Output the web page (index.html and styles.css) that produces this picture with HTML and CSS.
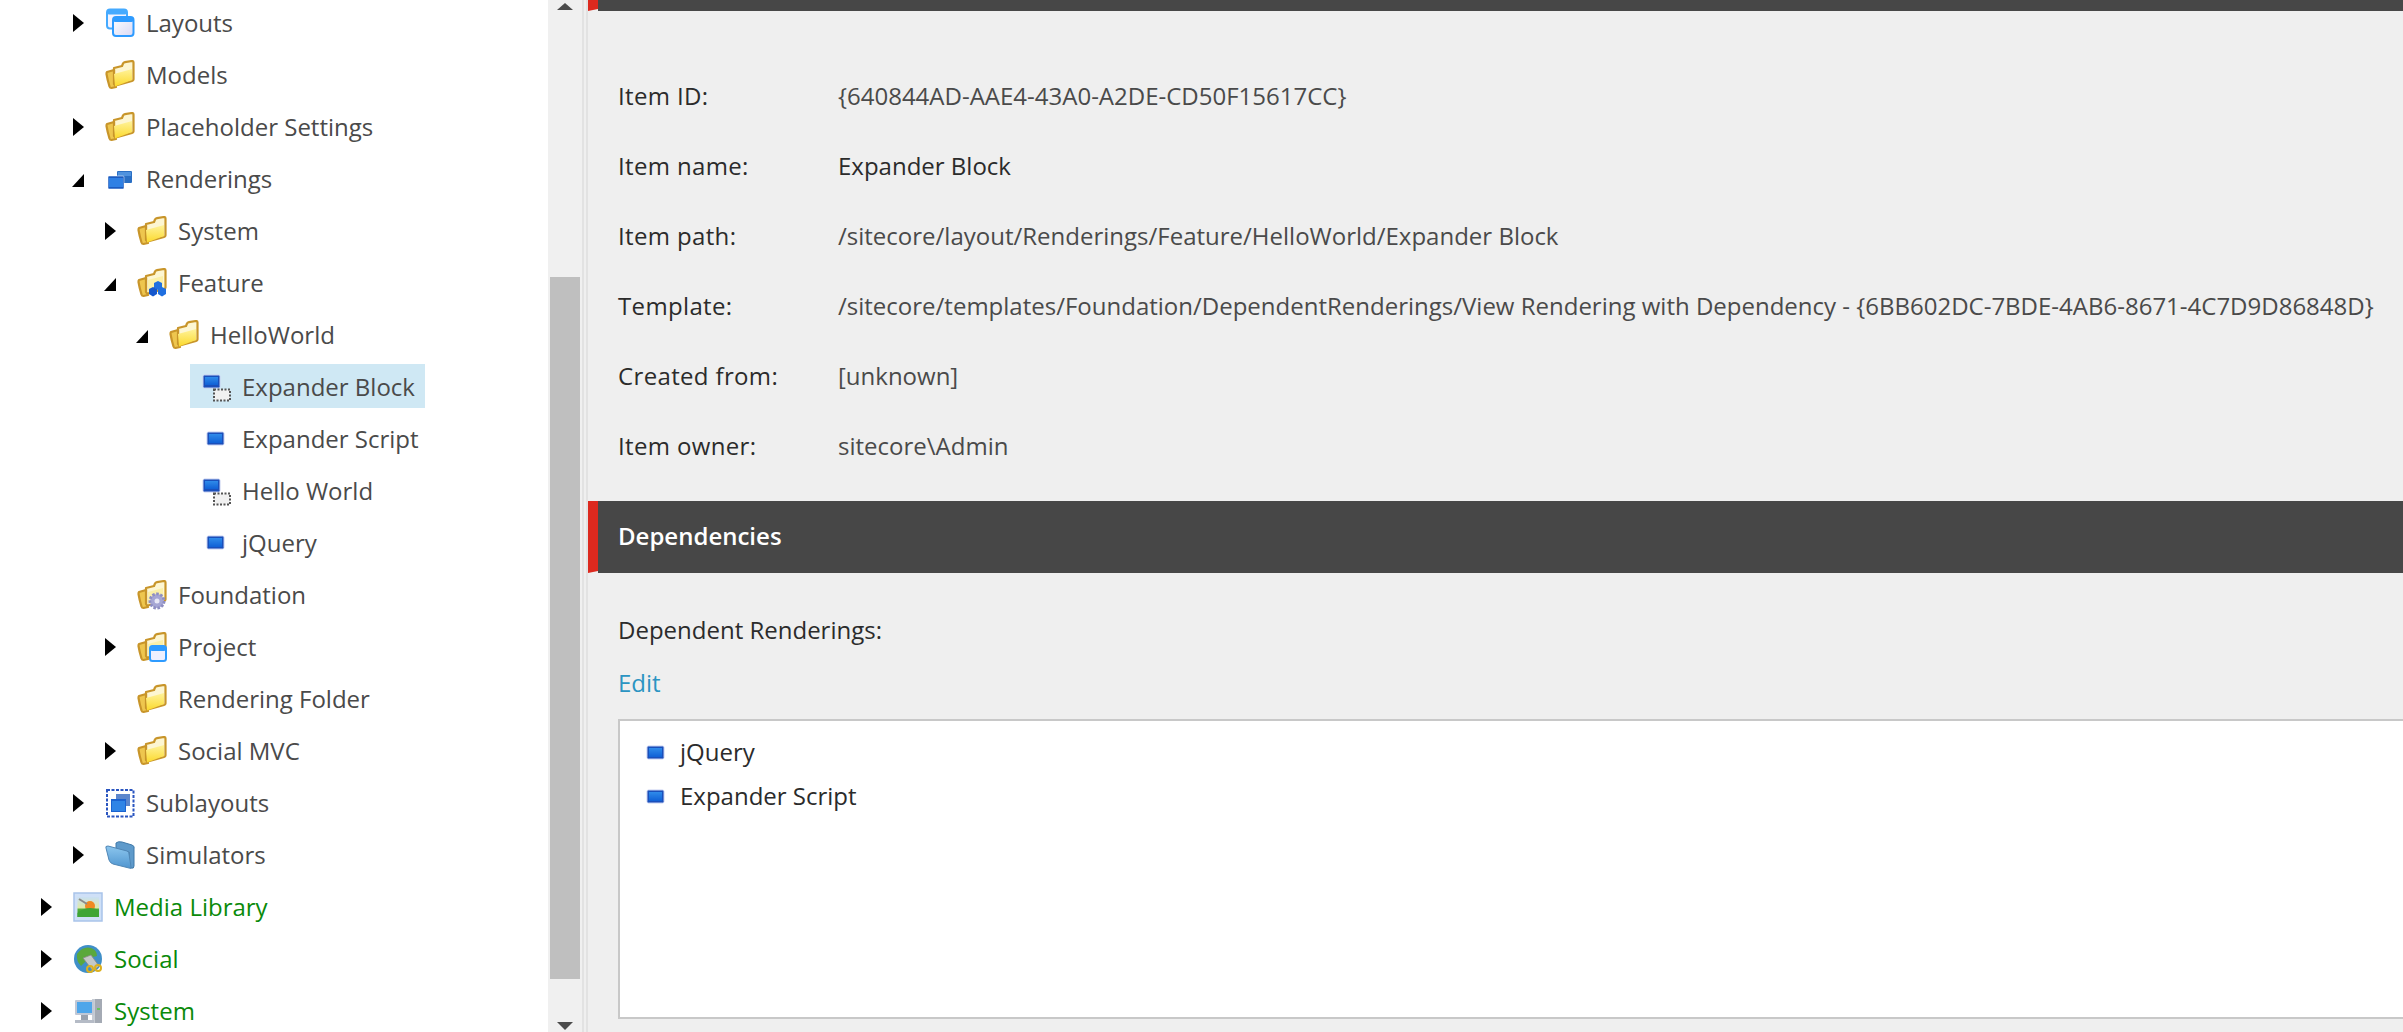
FILE: index.html
```html
<!DOCTYPE html>
<html lang="en">
<head>
<meta charset="utf-8">
<title>Expander Block</title>
<link rel="stylesheet" href="styles.css">
</head>
<body>
<svg class="defs" width="0" height="0" aria-hidden="true">
  <defs>
    <linearGradient id="gy" x1="0" y1="0" x2="0" y2="1"><stop offset="0" stop-color="#fff39a"/><stop offset="1" stop-color="#fbd92c"/></linearGradient>
    <linearGradient id="gb" x1="0" y1="0" x2="0" y2="1"><stop offset="0" stop-color="#2f8bea"/><stop offset="1" stop-color="#1060d6"/></linearGradient>
    <linearGradient id="gf" x1="0" y1="0" x2="0" y2="1"><stop offset="0" stop-color="#8cc6ee"/><stop offset="1" stop-color="#4f95cf"/></linearGradient>
    <linearGradient id="gw" x1="0" y1="0" x2="1" y2="1"><stop offset="0" stop-color="#fff"/><stop offset="1" stop-color="#d9d9f5"/></linearGradient>
    <linearGradient id="gs" x1="0" y1="0" x2="0" y2="1"><stop offset="0" stop-color="#c9e0f4"/><stop offset="0.55" stop-color="#dfe9a8"/><stop offset="0.6" stop-color="#55b23c"/><stop offset="1" stop-color="#2f8f2c"/></linearGradient>
    <symbol id="folder" viewBox="0 0 30 30">
      <path d="M9 8 L17 6 L18 3.500 Q18.500 2.500 20 2.200 L27 1 Q28.500 1 28.500 2.500 V19.500 Q28.500 20.500 27 21 L9 26Z" fill="#fdf6d2" stroke="#c8952a" stroke-width="2.200" stroke-linejoin="round"/>
      <path d="M2 12 L9 10 V24 L11 27 L6.500 28 Q5 28 4.500 26.500 Q2.500 20 1.500 14 Q1.500 12.500 2 12Z" fill="#eec64e" stroke="#c8952a" stroke-width="2.200" stroke-linejoin="round"/>
      <path d="M9 14 L27 9 V20 L10 26.500 Z" fill="url(#gy)"/>
    </symbol>
    <symbol id="folder-back" viewBox="0 0 30 30">
      <path d="M9 8 L17 6 L18 3.500 Q18.500 2.500 20 2.200 L27 1 Q28.500 1 28.500 2.500 V19.500 Q28.500 20.500 27 21 L9 26Z" fill="#fdf6d2" stroke="#c8952a" stroke-width="2.200" stroke-linejoin="round"/>
      <path d="M2 12 L9 10 V24 L11 27 L6.500 28 Q5 28 4.500 26.500 Q2.500 20 1.500 14 Q1.500 12.500 2 12Z" fill="#eec64e" stroke="#c8952a" stroke-width="2.200" stroke-linejoin="round"/>
      <path d="M11 12 L26 8 V19 L11 24Z" fill="#fbf0a8"/>
    </symbol>
    <symbol id="r-rect" viewBox="0 0 30 30">
      <rect x="6" y="8" width="17" height="13" rx="1.500" fill="#1a4fba" stroke="#c6cff0" stroke-width="1"/>
      <rect x="8" y="10" width="13" height="9" fill="url(#gb)"/>
    </symbol>
    <symbol id="r-view" viewBox="0 0 30 30">
      <rect x="2" y="3" width="17" height="13" rx="1.500" fill="#1a4fba" stroke="#c6cff0" stroke-width="1"/>
      <rect x="4" y="5" width="13" height="8" fill="url(#gb)"/>
      <rect x="13" y="17.500" width="16" height="11" fill="#f1f1f1" stroke="#555" stroke-width="2" stroke-dasharray="2 1.500"/>
    </symbol>
  </defs>
</svg>
<div class="app">
  <nav class="tree">
    <div class="row lv2"><span class="twisty closed"></span><span class="item"><svg class="icon" viewBox="0 0 30 30"><rect x="2" y="1.500" width="20" height="19" rx="3" fill="#f3f3ff" stroke="#45aaff" stroke-width="2"/><rect x="2" y="1.500" width="20" height="5" rx="2" fill="#45aaff"/><rect x="8" y="9" width="20.500" height="19" rx="3" fill="url(#gw)" stroke="#2e9bff" stroke-width="2"/><rect x="8" y="9" width="20.500" height="5" rx="2" fill="#2e9bff"/></svg><span class="label">Layouts</span></span></div>
    <div class="row lv2"><span class="twisty"></span><span class="item"><svg class="icon"><use href="#folder"/></svg><span class="label">Models</span></span></div>
    <div class="row lv2"><span class="twisty closed"></span><span class="item"><svg class="icon"><use href="#folder"/></svg><span class="label">Placeholder Settings</span></span></div>
    <div class="row lv2"><span class="twisty open"></span><span class="item"><svg class="icon" viewBox="0 0 30 30"><rect x="12" y="7" width="15" height="12" rx="1" fill="#2a6fc4"/><rect x="13" y="8" width="13" height="4" fill="#4f92de"/><rect x="3" y="12" width="16" height="13" rx="1" fill="#1b5bc0" stroke="#fff" stroke-width="0.500"/><rect x="4" y="14" width="14" height="9" fill="#2f80e4"/></svg><span class="label">Renderings</span></span></div>
    <div class="row lv3"><span class="twisty closed"></span><span class="item"><svg class="icon"><use href="#folder"/></svg><span class="label">System</span></span></div>
    <div class="row lv3"><span class="twisty open"></span><span class="item"><svg class="icon" viewBox="0 0 30 30"><use href="#folder-back"/><path d="M17 15 L21 13 L25 15 V20 L21 22 L17 20Z" fill="#1f6fe0"/><path d="M12 21 L16 19 L20 21 V26 L16 28.500 L12 26Z" fill="#1557cc"/><path d="M21 21 L25 19 L29 21 V26 L25 28.500 L21 26Z" fill="#1f6fe0"/></svg><span class="label">Feature</span></span></div>
    <div class="row lv4"><span class="twisty open"></span><span class="item"><svg class="icon"><use href="#folder"/></svg><span class="label">HelloWorld</span></span></div>
    <div class="row lv5"><span class="twisty"></span><span class="item selected"><svg class="icon"><use href="#r-view"/></svg><span class="label">Expander Block</span></span></div>
    <div class="row lv5"><span class="twisty"></span><span class="item"><svg class="icon"><use href="#r-rect"/></svg><span class="label">Expander Script</span></span></div>
    <div class="row lv5"><span class="twisty"></span><span class="item"><svg class="icon"><use href="#r-view"/></svg><span class="label">Hello World</span></span></div>
    <div class="row lv5"><span class="twisty"></span><span class="item"><svg class="icon"><use href="#r-rect"/></svg><span class="label">jQuery</span></span></div>
    <div class="row lv3"><span class="twisty"></span><span class="item"><svg class="icon" viewBox="0 0 30 30"><use href="#folder-back"/><circle cx="20" cy="21" r="7" fill="#a9a9d6" stroke="#8e8ec2" stroke-width="3" stroke-dasharray="2.500 1.500"/><circle cx="20" cy="21" r="5.500" fill="#a6a6d4"/><circle cx="20" cy="21" r="2.500" fill="#e8e8f6"/></svg><span class="label">Foundation</span></span></div>
    <div class="row lv3"><span class="twisty closed"></span><span class="item"><svg class="icon" viewBox="0 0 30 30"><use href="#folder-back"/><rect x="13" y="14" width="16" height="15" rx="2.500" fill="#eef0ff" stroke="#2e9bff" stroke-width="2"/><rect x="13" y="14" width="16" height="5" rx="2" fill="#2e9bff"/></svg><span class="label">Project</span></span></div>
    <div class="row lv3"><span class="twisty"></span><span class="item"><svg class="icon"><use href="#folder"/></svg><span class="label">Rendering Folder</span></span></div>
    <div class="row lv3"><span class="twisty closed"></span><span class="item"><svg class="icon"><use href="#folder"/></svg><span class="label">Social MVC</span></span></div>
    <div class="row lv2"><span class="twisty closed"></span><span class="item"><svg class="icon" viewBox="0 0 30 30"><rect x="2" y="2" width="26.500" height="26.500" fill="#fff" stroke="#2a55c0" stroke-width="2" stroke-dasharray="3 1.500"/><rect x="11" y="6" width="14" height="12" fill="#5c86cc"/><rect x="6" y="11" width="15" height="13" fill="#1a62d0"/><rect x="7" y="13" width="13" height="10" fill="#2f84e6"/></svg><span class="label">Sublayouts</span></span></div>
    <div class="row lv2"><span class="twisty closed"></span><span class="item"><svg class="icon" viewBox="0 0 30 30"><path d="M11 3 Q13 1 17 2 L27 5 Q30 6 29 9 V26 Q29 29 26 28 L24 27 V12 L11 9Z" fill="#5e9acb" stroke="#3f78a8" stroke-width="1"/><path d="M1 8 Q0 6 3 6 L22 11 Q24 12 24 14 L26 27 Q27 29 24 28 L8 24 Q5 23 4 20Z" fill="url(#gf)" stroke="#4f86b5" stroke-width="1"/></svg><span class="label">Simulators</span></span></div>
    <div class="row lv1"><span class="twisty closed"></span><span class="item"><svg class="icon" viewBox="0 0 30 30"><rect x="1" y="1" width="28" height="28" fill="#cfe0f7" stroke="#a9c4ea" stroke-width="1.500"/><rect x="4.500" y="5" width="21.500" height="20" fill="url(#gs)"/><circle cx="17" cy="14" r="5" fill="#f08a22"/><path d="M4.500 21 Q14 13 26 18 V25 H4.500Z" fill="#3fa535"/><path d="M6 7 L14 12" stroke="#8a8a8a" stroke-width="2"/></svg><span class="label link">Media Library</span></span></div>
    <div class="row lv1"><span class="twisty closed"></span><span class="item"><svg class="icon" viewBox="0 0 30 30"><circle cx="15" cy="15" r="14" fill="#3f8fc8"/><path d="M4 10 Q10 2 18 4 Q24 6 24 12 L16 14 L8 22 Q3 17 4 10Z" fill="#5aa83c"/><path d="M10 14 L18 11 L26 22 L20 27Z" fill="#c4c8c8" stroke="#888" stroke-width="0.800"/><circle cx="17" cy="25" r="3" fill="none" stroke="#dcb01e" stroke-width="2"/><circle cx="25" cy="24" r="3" fill="none" stroke="#dcb01e" stroke-width="2"/></svg><span class="label link">Social</span></span></div>
    <div class="row lv1"><span class="twisty closed"></span><span class="item"><svg class="icon" viewBox="0 0 30 30"><rect x="19" y="3" width="10" height="24" fill="#a4aab4"/><rect x="19" y="3" width="3" height="24" fill="#c8cdd4"/><rect x="24" y="12" width="3" height="2" fill="#66c45a"/><rect x="2" y="4" width="19" height="15" rx="1" fill="#c0c8d6"/><rect x="4" y="6" width="15" height="11" fill="#4ea6ea"/><path d="M2 24 H21 V27 H2Z" fill="#b5bbc6"/><rect x="8" y="19" width="7" height="5" fill="#9aa2ae"/></svg><span class="label link">System</span></span></div>
  </nav>
  <div class="scrollbar">
    <span class="arrow up"></span>
    <div class="thumb"></div>
    <span class="arrow down"></span>
  </div>
  <div class="splitter"></div>
  <main class="content">
    <div class="bar bar-top"></div>
    <dl class="info">
      <dt>Item ID:</dt><dd>{640844AD-AAE4-43A0-A2DE-CD50F15617CC}</dd>
      <dt>Item name:</dt><dd class="strong">Expander Block</dd>
      <dt>Item path:</dt><dd>/sitecore/layout/Renderings/Feature/HelloWorld/Expander Block</dd>
      <dt>Template:</dt><dd>/sitecore/templates/Foundation/DependentRenderings/View Rendering with Dependency - {6BB602DC-7BDE-4AB6-8671-4C7D9D86848D}</dd>
      <dt>Created from:</dt><dd>[unknown]</dd>
      <dt>Item owner:</dt><dd>sitecore\Admin</dd>
    </dl>
    <h2 class="bar bar-title">Dependencies</h2>
    <section class="deps">
      <div class="deps-label">Dependent Renderings:</div>
      <a class="edit">Edit</a>
      <div class="box">
        <div class="box-item"><svg class="icon"><use href="#r-rect"/></svg><span>jQuery</span></div>
        <div class="box-item"><svg class="icon"><use href="#r-rect"/></svg><span>Expander Script</span></div>
      </div>
    </section>
  </main>
</div>
</body>
</html>
```

FILE: styles.css
```css
html, body {
  margin: 0;
  height: 100%;
  overflow: hidden;
  background: #fff;
  font-family: "Open Sans", "Noto Sans", sans-serif;
  font-size: 24px;
  color: #4a4a4a;
}
.defs { position: absolute; }
.app { display: flex; height: 1032px; overflow: hidden; }

.tree { width: 548px; flex: none; margin-top: -3px; }
.row { display: flex; align-items: center; height: 52px; white-space: nowrap; }
.lv1 { padding-left: 32px; }
.lv2 { padding-left: 64px; }
.lv3 { padding-left: 96px; }
.lv4 { padding-left: 128px; }
.lv5 { padding-left: 160px; }
.twisty { width: 30px; flex: none; display: flex; padding-left: 9px; box-sizing: border-box; }
.twisty.closed::before {
  content: "";
  border-left: 11px solid #000;
  border-top: 9px solid transparent;
  border-bottom: 9px solid transparent;
}
.twisty.open::before {
  content: "";
  margin: 2px 0 0 -1px;
  border-bottom: 13px solid #000;
  border-left: 12px solid transparent;
}
.item { display: flex; align-items: center; height: 46px; padding: 0 10px 0 11px; }
.item.selected { background: linear-gradient(#cfe8f4, #cfe8f4) 0 0 / 100% 44px no-repeat; }
.icon { width: 30px; height: 30px; flex: none; filter: blur(0.35px); }
.label { margin-left: 11px; line-height: 44px; }
.link { color: #0a8a0a; }

.scrollbar {
  width: 34px;
  flex: none;
  background: #f0f0f0;
  display: flex;
  flex-direction: column;
  align-items: center;
}
.arrow { width: 0; height: 0; border-left: 8px solid transparent; border-right: 8px solid transparent; }
.arrow.up { margin-top: 3px; border-bottom: 7px solid #4c4c4c; }
.arrow.down { margin-top: 43px; border-top: 8px solid #4c4c4c; }
.thumb { width: 30px; height: 702px; margin-top: 267px; background: #bfbfbf; }

.splitter {
  width: 6px;
  flex: none;
  background: linear-gradient(90deg, #e2e2e2 0 2px, #efefef 2px 4px, #e2e2e2 4px 6px);
}

.content { flex: 1; min-width: 0; background: #efefef; overflow: hidden; }
.bar {
  position: relative;
  margin: 0;
  background: linear-gradient(#474747, #474747) 10px 0 no-repeat;
}
.bar::before {
  content: "";
  position: absolute;
  left: 0;
  top: 0;
  bottom: 0;
  width: 10px;
  background: #dc291e;
  clip-path: polygon(0 0, 100% 0, 100% calc(100% - 2px), 0 100%);
}
.bar-top { height: 11px; }
.bar-title {
  height: 72px;
  line-height: 70px;
  padding-left: 30px;
  font-size: 24px;
  font-weight: 600;
  color: #fff;
}
.info {
  display: grid;
  grid-template-columns: 221px 1fr;
  grid-auto-rows: 70px;
  align-items: center;
  margin: 49px 0 21px 30px;
  white-space: nowrap;
}
.info dt { color: #2b2b2b; font-weight: 500; letter-spacing: 0.35px; }
.info dd { margin: 0 0 0 -1px; color: #4a4a4a; }
.info dd.strong { color: #2b2b2b; }

.deps { padding: 0 0 0 30px; }
.deps-label { color: #2b2b2b; margin-top: 38px; line-height: 38px; }
.edit { display: block; color: #2b94c2; margin-top: 15px; line-height: 38px; }
.box {
  margin: 17px -10px 0 0;
  height: 288px;
  border: 2px solid #c8c8c8;
  background: #fff;
  padding-top: 8px;
  color: #2b2b2b;
}
.box-item { display: flex; align-items: center; height: 44px; padding-left: 21px; }
.box-item .icon { margin-top: 4px; }
.box-item span { margin-left: 9px; }
```
